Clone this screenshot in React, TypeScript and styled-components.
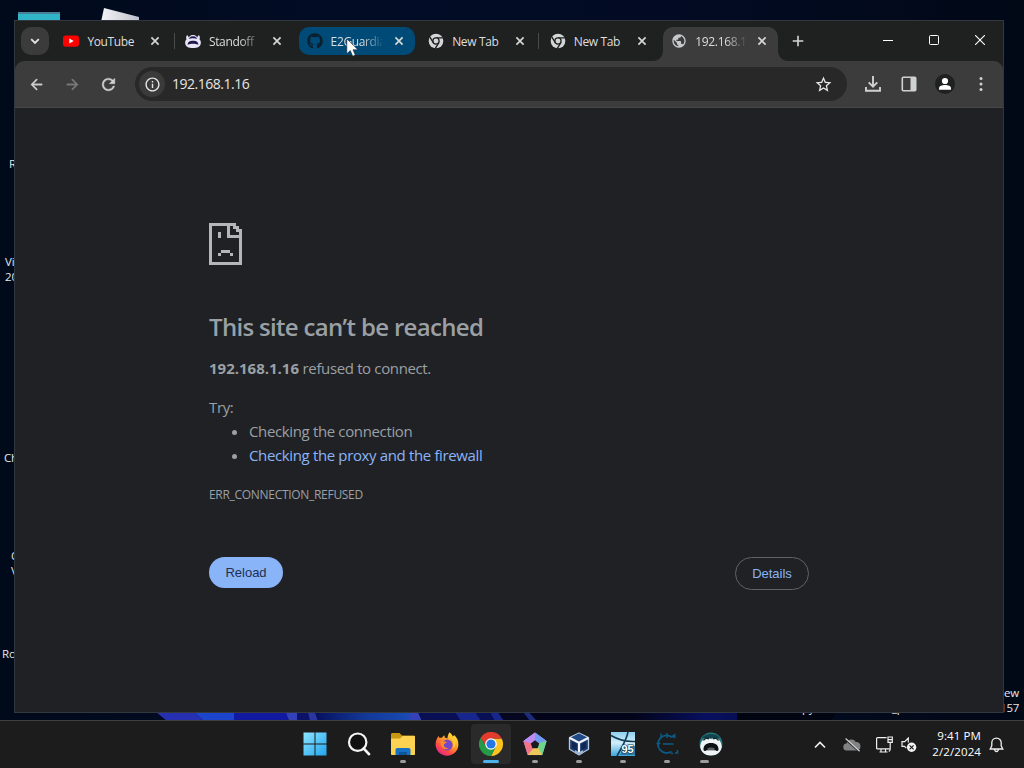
import React from 'react'
import styled, { createGlobalStyle, css } from 'styled-components'
import { FaGithub } from 'react-icons/fa'
import { MdArrowBack, MdArrowForward, MdOutlineInfo, MdPublic, MdRefresh, MdStarBorder } from 'react-icons/md'

const GlobalStyle = createGlobalStyle`
  body {
    margin: 0;
    background: #020b1c;
    font-family: 'Open Sans', 'Noto Sans', sans-serif;
  }

  svg {
    display: block;
    flex: none;
  }
`

/* ---------- desktop ---------- */

const Desktop = styled.div`
  position: relative;
  width: 1024px;
  height: 768px;
  overflow: hidden;
  background: linear-gradient(90deg, #010a1b 0%, #020c26 40%, #020b22 70%, #010816 100%);
`

const Wallpaper = styled.svg`
  position: absolute;
  left: 0;
  top: 0;
`

const DesktopLabel = styled.div<{ $x: number; $y: number }>`
  position: absolute;
  left: ${({ $x }) => $x}px;
  top: ${({ $y }) => $y}px;
  color: #e4e6ea;
  font-size: 11.5px;
  line-height: 15px;
  letter-spacing: -0.2px;
  white-space: pre;
`

const Window = styled.div`
  position: absolute;
  left: 14px;
  top: 20px;
  width: 988px;
  height: 691px;
  border: 1px solid #32383e;
  display: flex;
  flex-direction: column;
  background: #1f2020;
`

/* ---------- tab strip ---------- */

const TabStrip = styled.div`
  display: flex;
  align-items: flex-start;
  height: 40px;
  flex: none;
  padding: 6px 0 0 6px;
  box-sizing: border-box;
`

const TabSearch = styled.div`
  display: flex;
  align-items: center;
  justify-content: center;
  width: 28px;
  height: 28px;
  border-radius: 10px;
  background: #3b3b3b;
  margin-right: 6.4px;
`

const TabItem = styled.div<{ $state?: 'hover' | 'active' }>`
  position: relative;
  display: flex;
  align-items: center;
  box-sizing: border-box;
  width: 116px;
  height: 28px;
  padding: 0 8px;
  border-radius: 10px;
  color: #dcdedf;

  ${({ $state }) =>
    $state === 'hover' &&
    css`
      background: #004a77;
    `}

  ${({ $state }) =>
    $state === 'active' &&
    css`
      width: 115px;
      height: 34px;
      padding-bottom: 6px;
      border-radius: 10px 10px 0 0;
      background: #3c3c3c;

      &::before,
      &::after {
        content: '';
        position: absolute;
        bottom: 0;
        width: 10px;
        height: 10px;
      }

      &::before {
        left: -10px;
        background: radial-gradient(circle at 0 0, transparent 9.5px, #3c3c3c 10.5px);
      }

      &::after {
        right: -10px;
        background: radial-gradient(circle at 100% 0, transparent 9.5px, #3c3c3c 10.5px);
      }
    `}
`

const TabTitle = styled.span<{ $fade?: boolean }>`
  flex: 1;
  width: 0;
  margin: 0 9px 0 8px;
  padding-top: 2px;
  overflow: hidden;
  white-space: nowrap;
  font-size: 12px;
  line-height: 18px;
  letter-spacing: -0.36px;
  ${({ $fade }) =>
    $fade &&
    css`
      mask-image: linear-gradient(90deg, #000 60%, transparent 105%);
    `}
`

const TabGap = styled.div<{ $line?: boolean }>`
  width: 5.6px;
  height: 28px;
  display: flex;
  align-items: center;
  justify-content: center;

  &::after {
    content: '';
    width: 1px;
    height: 16px;
    background: ${({ $line }) => ($line ? '#4a4b4b' : 'transparent')};
  }
`

const NewTabButton = styled.div`
  display: flex;
  align-items: center;
  justify-content: center;
  width: 28px;
  height: 28px;
  margin-left: 5.5px;
`

const WindowControls = styled.div`
  display: flex;
  margin-left: auto;
  height: 26px;
`

const WindowButton = styled.div`
  width: 46px;
  display: flex;
  align-items: center;
  justify-content: center;
`

/* ---------- toolbar ---------- */

const Toolbar = styled.div`
  display: flex;
  align-items: center;
  flex: none;
  height: 47px;
  box-sizing: border-box;
  padding: 0 4px;
  border-radius: 9px 9px 0 0;
  border-bottom: 1px solid #484949;
  background: #3c3c3c;
`

const ToolButton = styled.div<{ $dim?: boolean }>`
  width: 36px;
  display: flex;
  align-items: center;
  justify-content: center;
  color: ${({ $dim }) => ($dim ? '#7b7b7b' : '#d0d1d1')};
`

const NavButton = styled(ToolButton)`
  box-sizing: border-box;
  padding-right: 1px;

  path:not([fill='none']) {
    stroke: currentColor;
    stroke-width: 0.5px;
  }
`

const AddressBar = styled.div`
  display: flex;
  align-items: center;
  flex: 1;
  height: 34px;
  margin: 0 8px;
  padding: 0 14px 0 4px;
  border-radius: 17px;
  background: #282828;
  color: #e6e6e6;
`

const SiteInfo = styled.div`
  display: flex;
  align-items: center;
  justify-content: center;
  width: 26px;
  height: 26px;
  border-radius: 50%;
  background: #3a3a3a;
`

const Address = styled.span`
  flex: 1;
  margin-left: 7px;
  font-size: 14px;
  line-height: 20px;
  letter-spacing: -0.48px;
`

const Avatar = styled.div`
  display: flex;
  width: 20px;
  height: 20px;
  border-radius: 50%;
  background: #1f2020;
`

/* ---------- error page ---------- */

const ErrorPage = styled.div`
  flex: 1;
  padding: 115px 0 0 194px;
  background: #202124;
  color: #9aa0a6;
`

const ErrorBody = styled.div`
  width: 600px;
  font-size: 15px;
  line-height: 24px;
  letter-spacing: -0.36px;

  strong {
    letter-spacing: 0;
  }
`

const Title = styled.h1`
  margin: 47px 0 0;
  font-size: 24px;
  font-weight: 600;
  line-height: 29px;
  letter-spacing: -0.68px;
`

const Paragraph = styled.p`
  margin: 15px 0 0;
`

const Suggestions = styled.ul`
  margin: 0;
  padding: 0 0 0 40px;
`

const LinkText = styled.a`
  color: #8ab4f8;
`

const ErrorCode = styled.div`
  margin-top: 19px;
  font-size: 12px;
  line-height: 18px;
  letter-spacing: -0.3px;
`

const ButtonRow = styled.div`
  display: flex;
  align-items: flex-start;
  justify-content: space-between;
  margin-top: 53px;
`

const PillButton = styled.button<{ $primary?: boolean }>`
  box-sizing: border-box;
  width: 74px;
  height: ${({ $primary }) => ($primary ? 31 : 33)}px;
  padding: 0;
  border: ${({ $primary }) => ($primary ? '0' : '1px solid #5f6368')};
  border-radius: 17px;
  background: ${({ $primary }) => ($primary ? '#8ab4f8' : 'transparent')};
  color: ${({ $primary }) => ($primary ? '#202f52' : '#8ab4f8')};
  font: 13px 'Liberation Sans', Arial, sans-serif;
`

/* ---------- taskbar ---------- */

const Taskbar = styled.div`
  position: absolute;
  left: 0;
  right: 0;
  bottom: 0;
  height: 47px;
  border-top: 1px solid #3f4043;
  display: flex;
  background: #1c1c1c;
  color: #fff;
`

const TaskButtons = styled.div`
  display: flex;
  gap: 4px;
  padding: 3px 0 0 295px;
`

const TaskButton = styled.div<{ $run?: 'idle' | 'active' | 'group' }>`
  width: 40px;
  height: 40px;
  box-sizing: border-box;
  display: flex;
  flex-direction: column;
  align-items: center;
  justify-content: space-between;
  padding-top: 8px;
  border-radius: 4px;
  background: ${({ $run }) => ($run === 'active' ? '#2a2a2a' : 'transparent')};

  &::after {
    content: '';
    width: ${({ $run }) => ($run === 'active' ? 16 : $run === 'group' ? 9 : 6)}px;
    height: 3px;
    margin-bottom: 1px;
    border-radius: 2px;
    ${({ $run }) =>
      $run === 'group' &&
      css`
        margin-right: 14px;
      `}
    background: ${({ $run }) => ($run === 'active' ? '#4cb2ec' : $run ? '#9c9c9c' : 'transparent')};
  }
`

const Tray = styled.div`
  display: flex;
  align-items: center;
  margin-left: auto;
  padding: 0 20px 0 0;
`

const TrayIcon = styled.div<{ $gap: number }>`
  margin-right: ${({ $gap }) => $gap}px;
`

const Clock = styled.div`
  width: 66px;
  margin-right: 8px;
  padding-bottom: 1px;
  text-align: right;
  white-space: nowrap;
  font-size: 11.5px;
  line-height: 16px;
  letter-spacing: 0.1px;
`

const Cursor = styled.svg`
  position: absolute;
  left: 346px;
  top: 38px;
`

/* ---------- drawings ---------- */

const CloseIcon = () => (
  <svg width="16" height="16" viewBox="0 0 16 16">
    <path d="M4.4 4.4l7.2 7.2M11.6 4.4l-7.2 7.2" stroke="#d5d6d6" strokeWidth="1.7" />
  </svg>
)

const YouTubeIcon = () => (
  <svg width="16" height="16" viewBox="0 0 16 16">
    <rect x="0" y="2.4" width="16" height="11.4" rx="2.8" fill="#f00" />
    <path d="M6.3 5.5v5l4.4-2.5z" fill="#fff" />
  </svg>
)

const StandoffIcon = () => (
  <svg width="16" height="16" viewBox="0 0 16 16">
    <path
      d="M2.2 2C.8 3.4 1.1 5.3 1.5 6.3.3 7.4 0 9 .2 10.4.6 13.5 3.4 15 8 15s7.4-1.500 7.800-4.600c.2-1.400-.1-3-1.300-4.100.4-1 .7-2.900-.7-4.300l-1.600 2.200C10.900 2.500 9.600 2 8 2s-2.900.5-4.200 2.200z"
      fill="#e9e6f8"
    />
    <path d="M3.6 5.8C5 3.9 6.5 3.3 8 3.3s3 .6 4.400 2.500c-2.500-.7-6.300-.7-8.800 0z" fill="#281c50" />
    <path d="M2.600 11.800c.2-3.200 2.200-4.100 5.400-4.100s5.200.9 5.400 4.100C11.500 10.900 9.500 10.700 8 10.700s-3.500.2-5.400 1.100z" fill="#21184a" />
  </svg>
)

const MonoChrome = () => (
  <svg width="16" height="16" viewBox="0 0 24 24">
    <circle cx="12" cy="12" r="11" fill="#d3d6d7" />
    <circle cx="12" cy="12" r="5.6" fill="#1f2020" />
    <path d="M12 7.2h10.300M7.900 14.500L2.700 5.700M16.200 14.500l-5.400 9" stroke="#1f2020" strokeWidth="2" />
    <circle cx="12" cy="12" r="3.7" fill="#d3d6d7" />
  </svg>
)

// one cell of the sad page drawing is 3px
const SadPage = () => (
  <svg width="33" height="42" viewBox="0 0 11 14" fill="#b4b7b9" shapeRendering="crispEdges">
    <path d="M0 0h9v1h1v1h1v12H0zM1 1v12h9V5H6V1zM7 1v3h3V3H9V2H8V1z" fillRule="evenodd" />
    <path d="M3 3h1v2H3zM4 9h3v1H4zM3 10h1v1H3zM7 10h1v1H7z" />
  </svg>
)

const StartIcon = () => (
  <svg width="24" height="24" viewBox="0 0 24 24">
    <defs>
      <linearGradient id="start" x1="0" y1="0" x2="24" y2="24" gradientUnits="userSpaceOnUse">
        <stop offset="0" stopColor="#8fe7ff" />
        <stop offset="1" stopColor="#20a2ee" />
      </linearGradient>
    </defs>
    <path d="M.5.5h11v11H.5zM12.500.5h11v11h-11zM.5 12.500h11v11H.5zM12.500 12.500h11v11h-11z" fill="url(#start)" />
  </svg>
)

const SearchIcon = () => (
  <svg width="24" height="24" viewBox="0 0 24 24" fill="none" stroke="#f4f4f4">
    <circle cx="10.7" cy="10.2" r="8.7" strokeWidth="2.2" fill="#111" />
    <path d="M16.800 16.600l5.200 5.500" strokeWidth="2.8" strokeLinecap="round" />
  </svg>
)

const FolderIcon = () => (
  <svg width="26" height="24" viewBox="0 0 26 24">
    <path d="M1 2.500C1 1.600 1.600 1 2.500 1h7l2.500 2.500h11.500c1 0 1.500.6 1.500 1.500V8H1z" fill="#c9960f" />
    <path d="M1 6.500h9l2.500-2.500H24c.6 0 1 .4 1 1v17c0 .6-.4 1-1 1H2c-.6 0-1-.4-1-1z" fill="#fbd252" />
    <path d="M5.500 23v-5c0-1.200.8-2 2-2h11c1.200 0 2 .8 2 2v5z" fill="#1670c4" />
    <path d="M9 20h8v3H9z" fill="#0d569c" />
  </svg>
)

const FirefoxIcon = () => (
  <svg width="24" height="24" viewBox="0 0 24 24">
    <defs>
      <linearGradient id="fox" x1="19" y1="2" x2="5" y2="22" gradientUnits="userSpaceOnUse">
        <stop offset="0" stopColor="#ffe63e" />
        <stop offset=".4" stopColor="#ff9a24" />
        <stop offset=".75" stopColor="#ff4a49" />
        <stop offset="1" stopColor="#e5258a" />
      </linearGradient>
    </defs>
    <path
      d="M14.500.3c1.600 1.200 2.700 2.600 3.300 4.100.7-.2 1.100-.7 1.300-1.300 2.800 2.300 4.300 5.500 4.300 9.400 0 6.300-5.100 11.200-11.400 11.200S.6 18.700.6 12.500C.6 9 1.800 6.200 3.700 3.900l.8 2.200c.8-.5 1.700-.7 2.600-.7.6-1 1.400-1.700 2.400-2.200l.3 2.400c1 .2 1.900.5 2.600 1 .2-2.300.8-4.600 2.100-6.300z"
      fill="url(#fox)"
    />
    <circle cx="12.2" cy="13" r="5.4" fill="#7546c9" />
    <path d="M5.500 9.800c2.400-.9 4.200-.2 6.600.2-1 1.400-3 1.200-3.300 2.800-.2 2.300 2.300 3.700 5 3-2 2.800-8.500 2-8.300-6z" fill="#ff8b25" />
    <path d="M16 6c3 3 3.600 7.500 1 11 3.400-1.500 4.800-7.500 1.500-11z" fill="#ffce35" />
  </svg>
)

const ChromeIcon = () => (
  <svg width="24" height="24" viewBox="0 0 24 24">
    <path d="M12 6.500h10.700a12 12 0 0 1-10.700 17.500l4.800-9.200z" fill="#fcc31e" />
    <path d="M1.600 6l5.600 8.800 4.800 2.700L12 6.500h10.700A12 12 0 0 0 1.600 6z" fill="#e33b2e" />
    <path d="M1.600 6a12 12 0 0 0 10.400 18l4.800-9.200H7.200z" fill="#259b48" />
    <circle cx="12" cy="12" r="5.8" fill="#fff" />
    <circle cx="12" cy="12" r="4.6" fill="#2577e3" />
  </svg>
)

const PentagonIcon = () => (
  <svg width="24" height="24" viewBox="0 0 24 24">
    <path
      d="M12 1L.9 9l4.200 13.600h13.800L23.100 9z"
      fill="#8c8cf0"
      stroke="#8c8cf0"
      strokeWidth="1"
      strokeLinejoin="round"
    />
    <path d="M12 .6L.4 9l6.600 3 7-4.500z" fill="#bd8cf2" />
    <path d="M12 .6L23.600 9l-5.800 4-5.800-5z" fill="#6f9cf0" />
    <path d="M23.600 9l-4.300 14-6.500-5 3.200-7z" fill="#6fd58a" />
    <path d="M19.300 23H4.700l4-7h6.600z" fill="#eec75b" />
    <path d="M4.700 23L.4 9l8 2.400 1.700 5.200z" fill="#f27386" />
    <path d="M12 8.200l4.200 3.200-1.600 4.900H9.400l-1.600-4.900z" fill="#1b1b1f" />
  </svg>
)

const CubeIcon = () => (
  <svg width="24" height="24" viewBox="0 0 24 24" strokeLinejoin="round">
    <path d="M12 1l9.500 4.700v11.500L12 22.800l-9.500-5.600V5.700z" fill="#1c3c70" stroke="#b5cbe5" strokeWidth="1.3" />
    <path d="M12 1.600l8.500 4.200L12 10.200 3.500 5.800z" fill="#204a85" />
    <path d="M2.800 6L12 10.800 21.200 6M12 10.800V22" fill="none" stroke="#f1f5fa" strokeWidth="2.2" />
    <path d="M5 9.400v6.400l4.700 2.800v-6.700zM19 9.400v6.400l-4.700 2.800v-6.700z" fill="#112950" />
    <path d="M8 18l4 2.200 4-2.200v3.200L12 23.500l-4-2.300z" fill="#9fb6d3" />
  </svg>
)

const Badge95 = styled.text`
  font: bold 11px 'Liberation Sans', sans-serif;
  fill: #fff;
  stroke: #15374e;
  stroke-width: 1.2px;
  paint-order: stroke;
`

const Win95Icon = () => (
  <svg width="24" height="24" viewBox="0 0 24 24">
    <defs>
      <linearGradient id="w95" x1="0" y1="0" x2="0" y2="24" gradientUnits="userSpaceOnUse">
        <stop offset="0" stopColor="#8fd0f0" />
        <stop offset=".45" stopColor="#d2edfa" />
        <stop offset="1" stopColor="#3ca6dc" />
      </linearGradient>
    </defs>
    <path d="M0 0h24v24H0z" fill="url(#w95)" />
    <path d="M0 3.500c7 4 14.500 6.500 24 6M17 0C15.500 8 12.500 12 6 24" fill="none" stroke="#123c56" strokeWidth="1.6" />
    <path d="M12.500 14h11.500v9H9z" fill="#2d7ba6" />
    <Badge95 x="10.500" y="21">
      95
    </Badge95>
  </svg>
)

const CheatIcon = () => (
  <svg width="24" height="24" viewBox="0 0 24 24" fill="none" stroke="#0d5a86">
    <path d="M19.500 6.300V3l-2.600 2A8.800 8.800 0 1 0 16.500 19.500" strokeWidth="1.8" />
    <path d="M8 12h10.500M12 1v5M6 1.500v5M1.500 11.500h4" strokeWidth="1.4" />
    <path d="M16 21.500h2M20 21h2.500v-3" strokeWidth="1.6" />
  </svg>
)

const FaceIcon = () => (
  <svg width="24" height="24" viewBox="0 0 24 24">
    <circle cx="12" cy="12" r="11.5" fill="#24767c" />
    <path d="M3 5.500C5.500 3 8.500 2 12 2s6.500 1 9 3.500L17 7c-3-1.300-7-1.300-10 0z" fill="#14444b" />
    <path d="M1.200 15C1.500 9 5 6 8 6c1.800 0 3 1 4 1s2.200-1 4-1c3 0 6.500 3 6.800 9-.8 5-5 8.500-10.800 8.500S2 20 1.200 15z" fill="#f0f4f4" />
    <path d="M4.500 8.500C5.500 6.500 8 5.500 10 7M19.500 8.500C18.500 6.500 16 5.500 14 7" fill="none" stroke="#10252a" strokeWidth="1.4" />
    <path d="M4.500 18c-.3-4.700 2.700-7 7.500-7s7.800 2.300 7.500 7c-1 2-2.500.2-4 .2h-7c-1.500 0-3 1.800-4-.2z" fill="#0d1114" />
    <path d="M8 16.500c2.500-1.200 5.500-1.200 8 0l-1 1.500H9z" fill="#5b6163" />
  </svg>
)

const ChevronUp = () => (
  <svg width="12" height="12" viewBox="0 0 12 12">
    <path d="M1 8.500l5-5 5 5" fill="none" stroke="#f2f2f2" strokeWidth="1.6" />
  </svg>
)

const CloudOff = () => (
  <svg width="18" height="14" viewBox="0 0 18 14">
    <path d="M4 12.500a3.500 3.500 0 0 1-.4-7A5 5 0 0 1 12.800 4a4.300 4.300 0 0 1 1.200 8.500z" fill="#818284" />
    <path d="M2.300 1.500l14 12.200" stroke="#1c1c1c" strokeWidth="1.4" />
    <path d="M2.600.5l14 12.700" stroke="#d2d2d2" strokeWidth="1.2" />
  </svg>
)

const NetworkIcon = () => (
  <svg width="17" height="17" viewBox="0 0 17 17" fill="none" stroke="#f0f0f0" strokeWidth="1.2">
    <path d="M10.500 1.600H1.600c-.6 0-1 .4-1 1v9.300c0 .6.4 1 1 1h12.200M5 13v3M9.500 13v3M3.500 16h8" />
    <path d="M12 1h4.300v5.400H12zM12 3.600h4.300M14.200 6.500V13c0 1-.4 2-1.400 2.600" />
  </svg>
)

const MutedSpeaker = () => (
  <svg width="16" height="16" viewBox="0 0 16 16">
    <path d="M7.300 5.500V1L3.700 4.600H1v4.800h2.500l1.800 1.800" fill="none" stroke="#f0f0f0" strokeWidth="1.2" />
    <circle cx="10.6" cy="10.3" r="4.7" fill="#f3f3f3" />
    <path d="M8.600 8.300l4 4M12.600 8.300l-4 4" stroke="#1c1c1c" strokeWidth="1.1" />
  </svg>
)

const BellIcon = () => (
  <svg width="15" height="16" viewBox="0 0 15 16" fill="none" stroke="#f0f0f0" strokeWidth="1.3">
    <path d="M7.500 1.200c-2.800 0-4.700 2-4.700 4.600v3L1.200 12h12.600l-1.600-3.200v-3c0-2.600-1.900-4.600-4.700-4.600zM5.600 12.300c.1 1.400.8 2.200 1.900 2.200s1.800-.8 1.900-2.200" />
  </svg>
)

interface TabData {
  title: string
  icon: React.ReactNode
  state?: 'hover' | 'active'
  fade?: boolean
  line?: boolean
}

const tabs: TabData[] = [
  { title: 'YouTube', icon: <YouTubeIcon />, line: true },
  { title: 'Standoff', icon: <StandoffIcon />, fade: true },
  { title: 'E2Guardian', icon: <FaGithub size={16} color="#0b202f" />, state: 'hover', fade: true },
  { title: 'New Tab', icon: <MonoChrome />, line: true },
  { title: 'New Tab', icon: <MonoChrome /> },
  { title: '192.168.1.16', icon: <MdPublic size={16} color="#c7cacc" />, state: 'active', fade: true },
]

const labels = [
  { x: 9, y: 156, text: 'Re' },
  { x: 5, y: 254, text: 'Vis\n202' },
  { x: 4, y: 450, text: 'Che' },
  { x: 11, y: 548, text: 'Or\nVi' },
  { x: 2, y: 646, text: 'Rob' },
  { x: 1004, y: 685, text: 'ew' },
  { x: 1000, y: 700, text: '157' },
  { x: 802, y: 700, text: 'py' },
  { x: 892, y: 700, text: '_p' },
]

const App: React.FC = () => (
  <>
    <GlobalStyle />
    <Desktop>
      <Wallpaper width="1024" height="768">
        <defs>
          <linearGradient id="paper">
            <stop offset="0" stopColor="#f4f4f8" />
            <stop offset="1" stopColor="#bfc0cd" />
          </linearGradient>
          <linearGradient id="petal">
            <stop offset="0" stopColor="#060f5e" />
            <stop offset=".5" stopColor="#123695" />
            <stop offset="1" stopColor="#1a4bb4" />
          </linearGradient>
          <linearGradient id="glow">
            <stop offset="0" stopColor="#02041a" />
            <stop offset=".7" stopColor="#080f60" />
            <stop offset="1" stopColor="#070e55" />
          </linearGradient>
        </defs>
        <path d="M18 12h42v10H18z" fill="#2fb4c8" />
        <path d="M18 12h42v2H18z" fill="#4b7f98" />
        <path d="M104 8l35 9v5h-38z" fill="url(#paper)" />
        <path d="M156 712h38l10 9h-37z" fill="#2630b0" />
        <path d="M194 712h42v9h-32z" fill="#1c44cc" />
        <path d="M234 712h54v9h-54z" fill="#1019a0" />
        <path d="M286 712h11v9h-8z" fill="#3341b9" />
        <path d="M297 712h13v9h-13z" fill="#0b1268" />
        <path d="M308 712h7l3 9h-8z" fill="#2c36a0" />
        <path d="M315 712h95v9h-92z" fill="url(#petal)" />
        <path d="M410 712h8l4 9h-12z" fill="#3541b7" />
        <path d="M418 712h78l5 9h-79z" fill="#080f55" />
        <path d="M455 712h20l6 9h-20zM490 712h8l6 9h-9z" fill="#17268d" />
        <path d="M498 712h24l10 9h-28z" fill="#04071f" />
        <path d="M523 712h6l8 9h-7z" fill="#1c2c7c" />
        <path d="M529 712h111v9H537z" fill="#02041a" />
        <path d="M635 712h102v9H635z" fill="url(#glow)" />
        <path d="M737 712h100l-6 9h-94z" fill="#010511" />
      </Wallpaper>

      {labels.map((label) => (
        <DesktopLabel key={label.text} $x={label.x} $y={label.y}>
          {label.text}
        </DesktopLabel>
      ))}

      <Window>
        <TabStrip>
          <TabSearch>
            <svg width="12" height="12" viewBox="0 0 12 12">
              <path d="M2.200 4.200L6 8l3.800-3.800" fill="none" stroke="#e2e2e2" strokeWidth="1.9" />
            </svg>
          </TabSearch>
          {tabs.map((tab, i) => (
            <React.Fragment key={i}>
              <TabItem $state={tab.state}>
                {tab.icon}
                <TabTitle $fade={tab.fade}>{tab.title}</TabTitle>
                <CloseIcon />
              </TabItem>
              {i < tabs.length - 1 && <TabGap $line={tab.line} />}
            </React.Fragment>
          ))}
          <NewTabButton>
            <svg width="12" height="12" viewBox="0 0 12 12">
              <path d="M6 .7v10.600M.7 6h10.600" stroke="#d5d6d6" strokeWidth="1.6" />
            </svg>
          </NewTabButton>
          <WindowControls>
            <WindowButton>
              <svg width="10" height="10" viewBox="0 0 10 10">
                <path d="M0 5.500h10" stroke="#fff" />
              </svg>
            </WindowButton>
            <WindowButton>
              <svg width="10" height="10" viewBox="0 0 10 10">
                <rect x=".5" y=".5" width="9" height="9" rx="1" fill="none" stroke="#fff" />
              </svg>
            </WindowButton>
            <WindowButton>
              <svg width="10" height="10" viewBox="0 0 10 10">
                <path d="M0 0l10 10M10 0L0 10" stroke="#fff" strokeWidth="1.1" />
              </svg>
            </WindowButton>
          </WindowControls>
        </TabStrip>

        <Toolbar>
          <NavButton>
            <MdArrowBack size={17} />
          </NavButton>
          <NavButton $dim>
            <MdArrowForward size={17} />
          </NavButton>
          <NavButton>
            <MdRefresh size={19} />
          </NavButton>
          <AddressBar>
            <SiteInfo>
              <MdOutlineInfo size={17} />
            </SiteInfo>
            <Address>192.168.1.16</Address>
            <MdStarBorder size={19} />
          </AddressBar>
          <ToolButton>
            <svg width="16" height="16" viewBox="0 0 16 16" fill="none" stroke="currentColor" strokeWidth="1.9">
              <path d="M8 0v10M3.700 6.300L8 10.600l4.300-4.300M1 11v3.800h14V11" />
            </svg>
          </ToolButton>
          <ToolButton>
            <svg width="16" height="16" viewBox="0 0 16 16">
              <rect x="1.3" y="1.3" width="13.4" height="13.4" rx="1" fill="none" stroke="currentColor" strokeWidth="1.6" />
              <path d="M9.500 1.500H15v13H9.500z" fill="currentColor" />
            </svg>
          </ToolButton>
          <ToolButton>
            <Avatar>
              <svg width="20" height="20" viewBox="0 0 20 20" fill="#fff">
                <circle cx="10" cy="7" r="3.1" />
                <path d="M4 15.800v-1.600c0-2 3-3.200 6-3.200s6 1.200 6 3.200v1.600z" />
              </svg>
            </Avatar>
          </ToolButton>
          <ToolButton>
            <svg width="4" height="16" viewBox="0 0 4 16" fill="currentColor">
              <circle cx="2" cy="2.6" r="1.5" />
              <circle cx="2" cy="8" r="1.5" />
              <circle cx="2" cy="13.4" r="1.5" />
            </svg>
          </ToolButton>
        </Toolbar>

        <ErrorPage>
          <ErrorBody>
            <SadPage />
            <Title>This site can’t be reached</Title>
            <Paragraph>
              <strong>192.168.1.16</strong> refused to connect.
            </Paragraph>
            <Paragraph>Try:</Paragraph>
            <Suggestions>
              <li>Checking the connection</li>
              <li>
                <LinkText>Checking the proxy and the firewall</LinkText>
              </li>
            </Suggestions>
            <ErrorCode>ERR_CONNECTION_REFUSED</ErrorCode>
            <ButtonRow>
              <PillButton $primary>Reload</PillButton>
              <PillButton>Details</PillButton>
            </ButtonRow>
          </ErrorBody>
        </ErrorPage>
      </Window>

      <Taskbar>
        <TaskButtons>
          <TaskButton>
            <StartIcon />
          </TaskButton>
          <TaskButton>
            <SearchIcon />
          </TaskButton>
          <TaskButton $run="idle">
            <FolderIcon />
          </TaskButton>
          <TaskButton>
            <FirefoxIcon />
          </TaskButton>
          <TaskButton $run="active">
            <ChromeIcon />
          </TaskButton>
          <TaskButton $run="idle">
            <PentagonIcon />
          </TaskButton>
          <TaskButton $run="idle">
            <CubeIcon />
          </TaskButton>
          <TaskButton $run="idle">
            <Win95Icon />
          </TaskButton>
          <TaskButton $run="idle">
            <CheatIcon />
          </TaskButton>
          <TaskButton $run="group">
            <FaceIcon />
          </TaskButton>
        </TaskButtons>
        <Tray>
          <TrayIcon $gap={17}>
            <ChevronUp />
          </TrayIcon>
          <TrayIcon $gap={15}>
            <CloudOff />
          </TrayIcon>
          <TrayIcon $gap={8}>
            <NetworkIcon />
          </TrayIcon>
          <TrayIcon $gap={-2}>
            <MutedSpeaker />
          </TrayIcon>
          <Clock>
            9:41 PM
            <br />
            2/2/2024
          </Clock>
          <BellIcon />
        </Tray>
      </Taskbar>

      <Cursor width="14" height="20" viewBox="0 0 14 20">
        <path d="M.8.8v15l3.500-3.200 2.400 5.600 2.600-1.100-2.300-5.300h5z" fill="#fff" stroke="#10202c" strokeWidth=".6" />
      </Cursor>
    </Desktop>
  </>
)

export default App
